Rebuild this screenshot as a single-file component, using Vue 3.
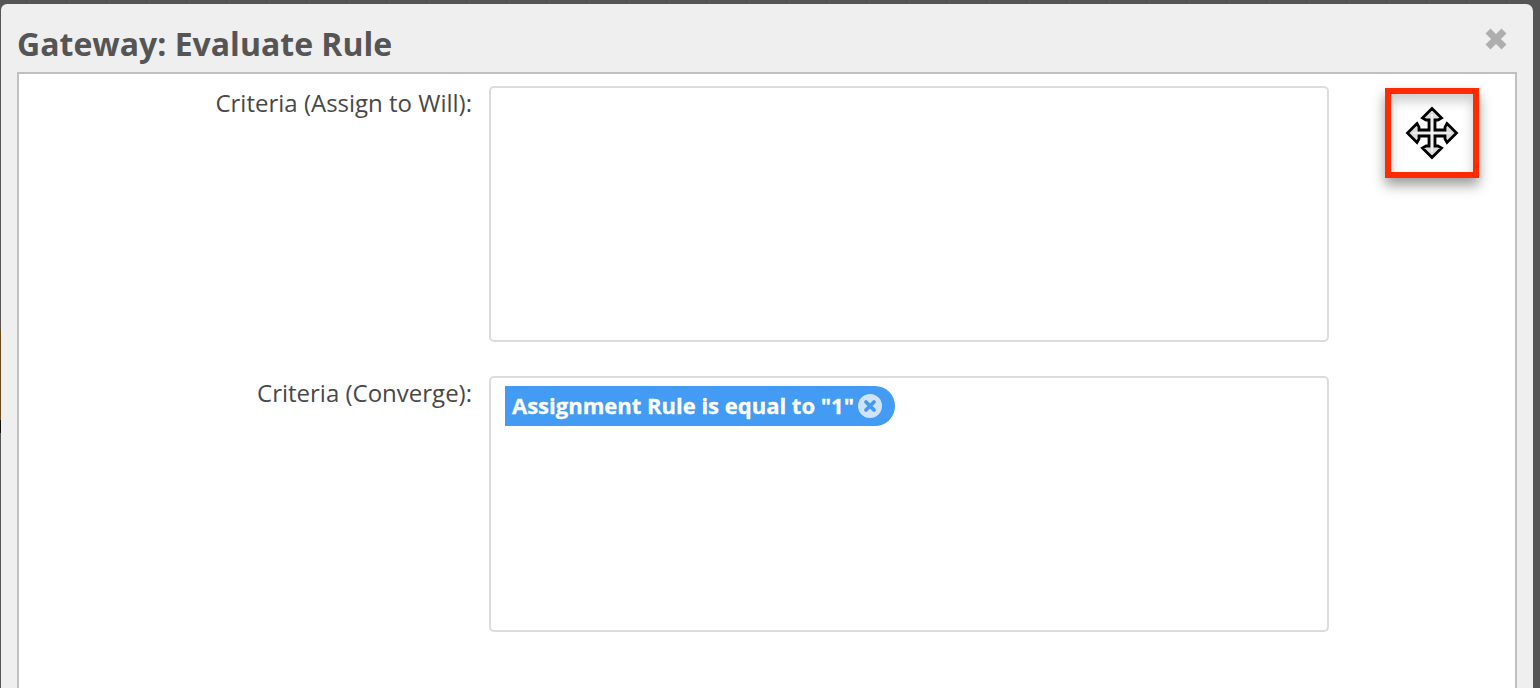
<template>
  <div class="page">
    <div class="dialog">
      <div class="dialog-header">
        <h1 class="dialog-title">Gateway: Evaluate Rule</h1>
        <svg class="close-icon" width="22" height="22" viewBox="0 0 22 22">
          <path d="M5.5 5.5l11 11M16.5 5.5l-11 11" stroke="#aeaeae" stroke-width="7" stroke-linecap="square" />
        </svg>
      </div>
      <div class="dialog-body">
        <div class="form-row">
          <label class="form-label">Criteria (Assign to Will):</label>
          <div class="criteria-box"></div>
        </div>
        <div class="form-row">
          <label class="form-label">Criteria (Converge):</label>
          <div class="criteria-box">
            <span class="pill">
              Assignment Rule is equal to "1"
              <svg class="pill-remove" width="24" height="24" viewBox="0 0 24 24">
                <circle cx="12" cy="12" r="12" fill="#cfe4fb" />
                <path d="M8 8l8 8M16 8l-8 8" stroke="#439bf3" stroke-width="3.8" stroke-linecap="round" />
              </svg>
            </span>
          </div>
        </div>
        <div class="highlight">
          <svg width="54" height="54" viewBox="0 0 54 54">
            <path
              d="M27 2.5L36.5 12 33 14H30V24H40V21L42 17.5 51.5 27 42 36.5 40 33V30H30V40H33L36.5 42 27 51.5 17.5 42 21 40H24V30H14V33L12 36.5 2.5 27 12 17.5 14 21V24H24V14H21L17.5 12Z"
              fill="#dcdcdc"
              stroke="#000"
              stroke-width="2.8"
              stroke-linejoin="miter"
            />
            <path d="M27 8v38M8 27h38" stroke="#f4f4f4" stroke-width="1.6" />
          </svg>
        </div>
      </div>
    </div>
  </div>
</template>

<script setup>
</script>

<style>
html,
body {
  margin: 0;
  background: #555;
  overflow: hidden;
}
</style>

<style scoped>
.page {
  height: 688px;
  box-sizing: border-box;
  padding: 4px 7px 0 1px;
  background:
    linear-gradient(#6b4a1c, #6b4a1c) 0 330px / 1px 90px no-repeat,
    linear-gradient(#111, #111) 0 420px / 1px 13px no-repeat,
    repeating-linear-gradient(90deg, transparent 0 26px, #4e4e4e 26px 27px, transparent 27px 40px) 0 0 / 100% 4px no-repeat,
    #555;
  font-family: "Open Sans", "Liberation Sans", sans-serif;
}

.dialog {
  height: 684px;
  box-sizing: border-box;
  display: flex;
  flex-direction: column;
  padding: 0 16px;
  background: #efefef;
  border-radius: 6px 7px 0 0;
}

.dialog-header {
  height: 68px;
  flex-shrink: 0;
  display: flex;
  justify-content: space-between;
  align-items: flex-start;
}

.dialog-title {
  margin: 20px 0 0 0;
  font-size: 32px;
  line-height: 40px;
  font-weight: 700;
  color: #555;
}

.close-icon {
  margin: 24px 10px 0 0;
}

.dialog-body {
  flex: 1;
  position: relative;
  box-sizing: border-box;
  padding: 12px 0 0 0;
  display: flex;
  flex-direction: column;
  gap: 34px;
  background: #fff;
  border: 2px solid #c0c0c0;
  border-bottom: none;
}

.form-row {
  display: flex;
  align-items: flex-start;
  gap: 17px;
}

.form-label {
  width: 453px;
  padding-top: 1px;
  text-align: right;
  font-size: 24px;
  line-height: 32px;
  color: #484848;
}

.criteria-box {
  width: 840px;
  height: 256px;
  box-sizing: border-box;
  padding: 8px 14px;
  background: #fff;
  border: 2px solid #dcdcdc;
  border-radius: 5px;
}

.pill {
  display: inline-flex;
  align-items: center;
  gap: 4px;
  height: 40px;
  box-sizing: border-box;
  padding: 0 13px 2px 7px;
  background: #439bf3;
  border-radius: 0 20px 20px 0;
  color: #fff;
  font-size: 22px;
  font-weight: 700;
  -webkit-text-stroke: 0.3px #fff;
  white-space: nowrap;
}

.pill-remove {
  flex-shrink: 0;
  margin-top: 2px;
}

.highlight {
  position: absolute;
  left: 1366px;
  top: 14px;
  width: 94px;
  height: 90px;
  box-sizing: border-box;
  display: flex;
  align-items: center;
  justify-content: center;
  border: 6px solid #ff2a00;
  box-shadow: 0 7px 12px rgba(0, 0, 0, 0.4), inset 0 7px 12px rgba(0, 0, 0, 0.2);
}
</style>
